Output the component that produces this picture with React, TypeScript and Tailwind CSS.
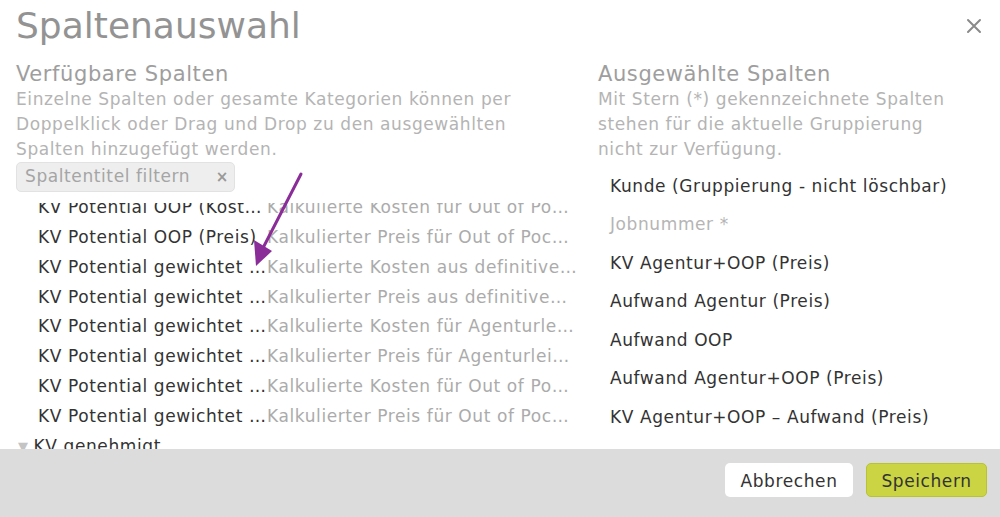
import React from "react";

const available = [
  { name: "KV Potential OOP (Kosten)", desc: "Kalkulierte Kosten für Out of Pocket Leistungen" },
  { name: "KV Potential OOP (Preis)", desc: "Kalkulierter Preis für Out of Pocket Leistungen" },
  { name: "KV Potential gewichtet Agentur (Kosten)", desc: "Kalkulierte Kosten aus definitiven Kostenvoranschlägen" },
  { name: "KV Potential gewichtet Agentur (Preis)", desc: "Kalkulierter Preis aus definitiven Kostenvoranschlägen" },
  { name: "KV Potential gewichtet Agenturleistung (Kosten)", desc: "Kalkulierte Kosten für Agenturleistungen" },
  { name: "KV Potential gewichtet Agenturleistung (Preis)", desc: "Kalkulierter Preis für Agenturleistungen" },
  { name: "KV Potential gewichtet OOP (Kosten)", desc: "Kalkulierte Kosten für Out of Pocket Leistungen" },
  { name: "KV Potential gewichtet OOP (Preis)", desc: "Kalkulierter Preis für Out of Pocket Leistungen" },
];

const selected = [
  { name: "Kunde (Gruppierung - nicht löschbar)", muted: false },
  { name: "Jobnummer *", muted: true },
  { name: "KV Agentur+OOP (Preis)", muted: false },
  { name: "Aufwand Agentur (Preis)", muted: false },
  { name: "Aufwand OOP", muted: false },
  { name: "Aufwand Agentur+OOP (Preis)", muted: false },
  { name: "KV Agentur+OOP – Aufwand (Preis)", muted: false },
];

export default function App() {
  return (
    <div
      className="relative flex h-[517px] w-[1000px] flex-col overflow-hidden bg-white text-[17px] tracking-[0.035em]"
      style={{ fontFamily: '"DejaVu Sans", "Open Sans", sans-serif' }}
    >
      {/* Header */}
      <div className="flex items-start justify-between pl-4 pr-[18px] pt-[2px]">
        <h1 className="text-[36px] leading-[48px] font-normal tracking-normal text-[#939393]">Spaltenauswahl</h1>
        <button className="mt-[16px] text-[#8a8a8a]">
          <svg width="16" height="16" viewBox="0 0 16 16">
            <path d="M2 2 L14 14 M14 2 L2 14" stroke="currentColor" strokeWidth="2" strokeLinecap="round" />
          </svg>
        </button>
      </div>

      {/* Body */}
      <div className="grid min-h-0 flex-1 grid-cols-[582px_1fr] pl-4 pt-[11px]">
        {/* Available */}
        <div className="flex min-h-0 flex-col">
          <h2 className="text-[21px] leading-[26px] text-[#9e9e9e]">Verfügbare Spalten</h2>
          <p className="w-[515px] leading-[25px] text-[#b4b4b4]">
            Einzelne Spalten oder gesamte Kategorien können per Doppelklick oder Drag und Drop zu den ausgewählten
            Spalten hinzugefügt werden.
          </p>
          <div className="flex h-[30px] w-[219px] items-center justify-between rounded-[5px] border border-[#e2e2e2] bg-[#eeeeee] pl-2 pr-[5px]">
            <span className="text-[#a5a5a5]">Spaltentitel filtern</span>
            <span className="text-[15px] font-bold text-[#999]">×</span>
          </div>
          <div className="mt-[11px] min-h-0 flex-1 overflow-hidden">
            <div className="-mt-[10px]">
              {available.map((row, i) => (
                <div key={i} className="flex h-[29.8px] items-center pl-[22px]">
                  <span className="w-[229px] shrink-0 truncate text-[#333]">{row.name}</span>
                  <span className="w-[311px] truncate text-[#ababab]">{row.desc}</span>
                </div>
              ))}
              <div className="flex h-[30px] items-center pl-[2px] text-[#333]">
                <span className="mr-[5px] text-[13px] text-[#c4c4c4]">▼</span>
                KV genehmigt
              </div>
            </div>
          </div>
        </div>

        {/* Selected */}
        <div className="flex flex-col">
          <h2 className="text-[21px] leading-[26px] text-[#9e9e9e]">Ausgewählte Spalten</h2>
          <p className="w-[360px] leading-[25px] text-[#b4b4b4]">
            Mit Stern (*) gekennzeichnete Spalten stehen für die aktuelle Gruppierung nicht zur Verfügung.
          </p>
          <div className="pt-[5px]">
            {selected.map((s, i) => (
              <div
                key={i}
                className={`flex h-[38.5px] items-center pl-3 ${s.muted ? "text-[#b5b5b5]" : "text-[#333]"}`}
              >
                {s.name}
              </div>
            ))}
          </div>
        </div>
      </div>

      {/* Footer */}
      <div className="flex h-[68px] shrink-0 items-start justify-end gap-[13px] bg-[#dcdcdc] pr-[13px] pt-[14px]">
        <button className="h-[34px] w-[128px] rounded-[5px] bg-white pt-[3px] text-[#333]">Abbrechen</button>
        <button className="h-[34px] w-[121px] rounded-[5px] border border-[#b9c22f] bg-[#cbd442] pt-[3px] text-[#333]">
          Speichern
        </button>
      </div>

      {/* Annotation arrow */}
      <svg className="pointer-events-none absolute left-0 top-0" width="1000" height="517">
        <line x1="301" y1="174" x2="263" y2="248" stroke="#8a2d98" strokeWidth="3" strokeLinecap="round" />
        <polygon points="256,266 254,240 272,251" fill="#8a2d98" />
      </svg>
    </div>
  );
}
